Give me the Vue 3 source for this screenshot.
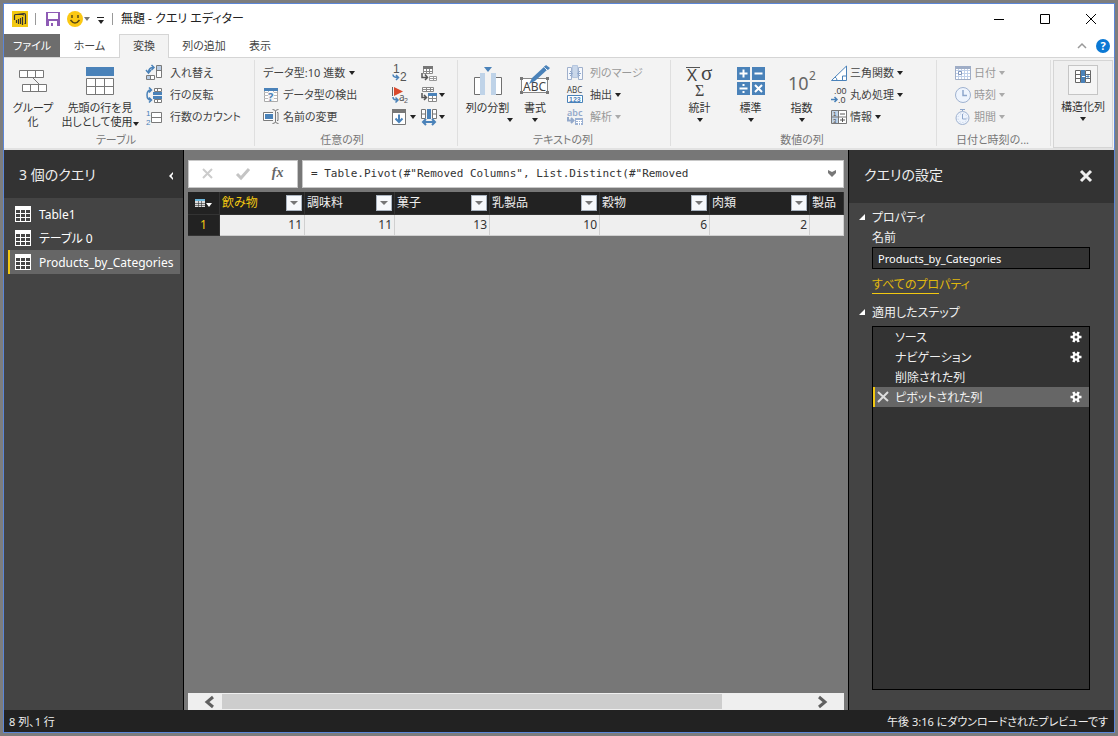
<script setup>
import { ref } from 'vue'

const B = '#4a82b9'
const G = '#7a7a7a'
const sans = 'font-family="Noto Sans"'
const tiny = 'font-family="Liberation Sans"'

const art = {
  swap: `<path d="M10.5.5h5v12h-5z" fill="#fff" stroke="${G}"/><path d="M11 1h4v4h-4z" fill="#b9cde4"/><path d="M10.5 5.5h5" stroke="${G}"/><path d="M.5 10.5h8v4h-8z" fill="#fff" stroke="${G}"/><path d="M1 11h4v3H1z" fill="#b9cde4"/><path d="M4.5 10.5v4" stroke="${G}"/><path d="M2.5 7.5Q2.5 2.5 7.5 2.5M5.5 0 8 2.5 5.5 5M0 5l2.5 3L5 5" fill="none" stroke="${B}" stroke-width="1.5"/>`,
  flip: `<path d="M8.5 1.5h7v3h-7zM8.5 12.5h7v3h-7zM11.5 1.5v3M11.5 12.5v3" fill="#fff" stroke="${G}"/><path d="M7 5h9v3H7zM7 9h9v3H7z" fill="${B}"/><path d="M5 3Q1 3 1 8t4 5M3 .5 5.5 3 3 5.5M3 10.5 5.5 13 3 15.5" fill="none" stroke="${B}" stroke-width="1.5"/>`,
  count: `<text x="0" y="7" font-size="8" ${tiny} fill="${B}">1</text><text x="0" y="16" font-size="8" ${tiny} fill="${B}">2</text><path d="M5.5 3.5h10v10h-10zM5.5 8.5h10" fill="#fff" stroke="${G}"/>`,
  detect: `<path d="M1.5 1.5h13v13h-13z" fill="#fff" stroke="#aaa"/><path d="M1 5.5h13M1 8.5h13M1 11.5h13M5.5 4v10M10.5 4v10" stroke="#bbb"/><path d="M1 1h14v3H1z" fill="${B}"/><path d="M5 5h6v9H5z" fill="#f3f3f3"/><text x="5" y="14" font-size="11" font-weight="700" ${sans} fill="${B}">?</text>`,
  rename: `<path d="M10 3.5H.5v8H10" fill="#fff" stroke="${G}"/><path d="M2 5h8v5H2z" fill="${B}"/><path d="M9.5.5q3 0 3 2v10q0 2-3 2M15.5.5q-3 0-3 2v10q0 2 3 2M14 3.5h1v8h-1" fill="none" stroke="${G}"/>`,
  replace: `<text x="1" y="8" font-size="12" ${tiny} fill="#555">1</text><text x="8" y="16" font-size="12" ${tiny} fill="#555">2</text><path d="M1 9.5q0 3 5 3M4 10l2.5 2.5L4 15" fill="none" stroke="${B}" stroke-width="1.5"/>`,
  flag: `<path d="M.5 0v9" stroke="#666"/><path d="M2 0l9 4.500L2 9z" fill="#d9492c"/><text x="7" y="14" font-size="10" ${sans} fill="#555">a</text><text x="12" y="16" font-size="7" ${tiny} fill="#555">2</text><path d="M1 10q0 3 4 3M3.5 10.5 6 13l-2.500 2.500" fill="none" stroke="${B}" stroke-width="1.5"/>`,
  fill: `<path d="M.5.5h13v15H.5z" fill="#fff" stroke="#777"/><path d="M0 0h14v4H0z" fill="#777"/><path d="M7 5.5v8M3.500 9.5 7 13l3.500-3.500" fill="none" stroke="${B}" stroke-width="2"/>`,
  unpivot: `<path d="M2.5 1.5h9v7h-9zM2 6.5h9M5.5 4v5M8.5 4v5" fill="#fff" stroke="#888"/><path d="M2 1h10v3H2z" fill="#777"/><path d="M8.5 11.5h7v4h-7zM8 13.5h8M12.5 11v5" fill="#fff" stroke="#999"/><path d="M1 8v4.500h5M4 9.5l2.500 3L4 15" fill="none" stroke="#555" stroke-width="1.5"/>`,
  pivot: `<path d="M1.5.5h11v4h-11zM1 2.5h12M5.5 0v5M9.5 0v5" fill="#fff" stroke="#888"/><path d="M7.5 6.5h8v8h-8zM7 11.5h9M11.5 8v7" fill="#fff" stroke="#888"/><path d="M7 6h9v3H7z" fill="${B}"/><path d="M1 6v4.500h4M3 8l2.500 2.500L3 13" fill="none" stroke="#555" stroke-width="1.5"/>`,
  move: `<path d="M.5.5h4v9h-4zM11.500.5h4v9h-4zM.5 5h4M11.500 5h4" fill="#fff" stroke="#777"/><path d="M6 0h4v10H6z" fill="${B}"/><path d="M3 13h10M5 10l-3 3 3 3M11 10l3 3-3 3" fill="none" stroke="${B}" stroke-width="2"/>`,
  merge: `<path d="M.5 2.5h4v12h-4zM11.500 2.5h4v12h-4z" fill="#f5f8fd" stroke="#9fb0cc"/><path d="M5.500.5h5v12h-5z" fill="#c9d7ea" stroke="#b5c6df"/><path d="M2 8.5h3M3 6l2.500 2.500L3 11M14 8.5h-3M13 6l-2.500 2.500L13 11" fill="none" stroke="#8ea6cb"/>`,
  extract: `<text x="0" y="6" font-size="8" ${sans} fill="#444">ABC</text><path d="M.5 8.500h15v7H.5z" fill="#fff" stroke="${B}"/><text x="2" y="15" font-size="7" font-weight="600" ${tiny} fill="${B}">123</text>`,
  parse: `<text x="0" y="7" font-size="9" font-weight="600" ${sans} fill="#93a9cb">abc</text><path d="M8 9h8v7H8z" fill="#9db2d3"/><path d="M9 11.500h6M9 13.500h6M11.500 11v5M13.500 11v5" stroke="#fff"/><path d="M1 8v3.500h5M4 9l2.500 2.500L4 14" fill="none" stroke="#93a9cb" stroke-width="2"/>`,
  trig: `<path d="M.5 15.500h15V1z" fill="#fff" stroke="${B}"/><path d="M11.500 15v-4H15M4 12q2 1 2 3.500" fill="none" stroke="${B}"/>`,
  round: `<text x="3" y="7" font-size="9" ${tiny} fill="#444">.00</text><text x="7" y="16" font-size="9" ${tiny} fill="#444">.0</text><path d="M0 12.500h6M3.500 10 6 12.500 3.500 15" fill="none" stroke="${B}" stroke-width="1.5"/>`,
  info: `<path d="M.5 1.500h15v13H.5z" fill="#fff" stroke="#777"/><path d="M1 2h6v12H1z" fill="#c3d5e9"/><path d="M1 8h14M7.500 2v12" stroke="#777"/><text x="2" y="7" font-size="6" ${tiny} fill="#444">1</text><text x="2" y="14" font-size="6" ${tiny} fill="#444">3</text><path d="M9 5h5M9 11h5M11.500 9v4" stroke="#555"/>`,
  date: `<path d="M.5 1.500h15v13H.5z" fill="#fff" stroke="#9fadc6"/><path d="M0 1h16v3H0z" fill="#9fadc6"/><path d="M1 5.500h14M1 8.500h14M1 11.500h14M3.500 4v10M6.500 4v10M9.500 4v10M12.500 4v10" stroke="#bfd0ea"/><path d="M3.500 6.500h3v3h-3z" fill="#fff" stroke="#8296bb"/>`,
  time: `<circle cx="8" cy="8" r="7.500" fill="#eef4fd" stroke="#9fb2d0"/><path d="M8 3v5.500h4" fill="none" stroke="#8ea6cb" stroke-width="1.5"/>`,
  span: `<circle cx="7.500" cy="9" r="6.500" fill="#eef4fd" stroke="#9fb2d0"/><path d="M5 .5h5M7.500 0v2M7.500 5v5h4" fill="none" stroke="#8ea6cb"/><circle cx="7.500" cy="9" r="4.500" fill="none" stroke="#bccbe3" stroke-dasharray="1 2"/>`,
  split: `<path d="M1.500 11.500h6v17h-6zM22.500 11.500h6v17h-6z" fill="#fff" stroke="#707070"/><path d="M7 7h5v22H7zM18 7h5v22h-5z" fill="#bfd3e8"/><path d="M11 1h8l-4 5z" fill="${B}"/>`,
  format: `<path d="M2.500 14.500h26v14h-26z" fill="#fff" stroke="#888"/><path d="M1 13h3v3H1zM27 13h3v3h-3zM1 27h3v3H1zM27 27h3v3h-3z" fill="#777"/><text x="4" y="27" font-size="12" ${sans} fill="#444">ABC</text><path d="M10 20l3-6L26 2l3 3-13 12z" fill="${B}"/><path d="M25 3l3 3" stroke="#fff"/><path d="M27 1l4 3-2 2-4-3z" fill="${B}"/>`,
  stats: `<path d="M1 1.500h14" stroke="#555"/><text x="2" y="15" font-size="17" ${sans} fill="#444">X</text><text x="16" y="14" font-size="21" font-family="Liberation Serif" fill="#444">σ</text><text x="10" y="30" font-size="16" font-family="Liberation Serif" fill="#444">Σ</text>`,
  standard: `<path d="M1 1h13v13H1zM16 1h13v13H16zM1 16h13v13H1zM16 16h13v13H16z" fill="${B}"/><path d="M3.500 7.500h8M7.500 3.500v8M18.500 7.500h8M3.500 22.500h8M19 19l7 7M26 19l-7 7M6.500 19h2M6.500 26h2" stroke="#fff" stroke-width="2"/>`,
  power: `<text x="1" y="24" font-size="18" ${sans} fill="#666">10</text><text x="22" y="14" font-size="12" ${sans} fill="#666">2</text>`,
  structured: `<path d="M.5 1.500h5v12h-5zM10.500 1.500h5v12h-5zM0 5.500h5M0 9.500h5M11 5.500h5M11 9.500h5" fill="#fff" stroke="#666"/><path d="M6 1h4v13H6z" fill="${B}"/><path d="M9 7.500h5M11.500 5l2.500 2.500-2.500 2.500" fill="none" stroke="${B}"/><path d="M7 7.500h3" stroke="#fff"/>`
}

const tableTools = [
  ['swap', '入れ替え'],
  ['flip', '行の反転'],
  ['count', '行数のカウント']
]
const textTools = [
  { icon: 'merge', text: '列のマージ', off: true },
  { icon: 'extract', text: '抽出', menu: true },
  { icon: 'parse', text: '解析', menu: true, off: true }
]
const numberBig = [['stats', '統計'], ['standard', '標準'], ['power', '指数']]
const numberTools = [
  { icon: 'trig', text: '三角関数' },
  { icon: 'round', text: '丸め処理' },
  { icon: 'info', text: '情報' }
]
const dateTools = [['date', '日付'], ['time', '時刻'], ['span', '期間']]

const queries = ['Table1', 'テーブル 0', 'Products_by_Categories']
const currentQuery = ref(2)
const columns = [
  { name: '飲み物', value: 11, cls: 'c1' },
  { name: '調味料', value: 11, cls: 'c2' },
  { name: '菓子', value: 13, cls: 'c3' },
  { name: '乳製品', value: 10, cls: 'c4' },
  { name: '穀物', value: 6, cls: 'c5' },
  { name: '肉類', value: 2, cls: 'c6' }
]
const steps = [
  { name: 'ソース', gear: true },
  { name: 'ナビゲーション', gear: true },
  { name: '削除された列', gear: false },
  { name: 'ピボットされた列', gear: true }
]
const currentStep = ref(3)
const queryName = ref('Products_by_Categories')
const formula = ref('= Table.Pivot(#"Removed Columns", List.Distinct(#"Removed')
</script>

<template>
  <div class="desktop">
    <div class="window">
      <header class="titlebar">
        <svg class="logo" viewBox="0 0 16 16"><path d="M0 0h16v16H0z" fill="#f2c811" /><path d="M2.500 9V4.500q0-1 1-1h7q1 0 1 1M13.500 6v6.500h-1M4.500 12V9M6.500 13V8M8.500 13V7M10.500 14V6M4.500 3.500 12 2.500q1.500 0 1.500 1.500v8" fill="none" stroke="#333" stroke-width="1.200" /></svg>
        <i class="bar"></i>
        <button class="plain save" aria-label="保存"><svg viewBox="0 0 14 14"><path d="M0 0h14v14H0z" fill="#8e5bb5" /><path d="M2 1h10v6H2zM3 9h8v5H3z" fill="#fff" /><path d="M5 11h2v3H5z" fill="#8e5bb5" /></svg></button>
        <button class="plain smile" aria-label="フィードバック"><svg viewBox="0 0 16 16"><circle cx="8" cy="8" r="8" fill="#fbc812" /><path d="M5 4v3M11 4v3M3.500 9q4.500 6 9 0" fill="none" stroke="#5a4a14" stroke-width="1.500" /></svg><i class="caret gray"></i></button>
        <button class="plain more" aria-label="カスタマイズ"><i class="dash"></i><i class="caret"></i></button>
        <i class="bar last"></i>
        <h1>無題 - クエリ エディター</h1>
        <div class="winctl">
          <button class="plain" aria-label="最小化"><svg viewBox="0 0 12 12"><path d="M1 6.500h10" stroke="#000" /></svg></button>
          <button class="plain" aria-label="最大化"><svg viewBox="0 0 12 12"><path d="M1.500 1.500h9v9h-9z" fill="none" stroke="#000" /></svg></button>
          <button class="plain" aria-label="閉じる"><svg viewBox="0 0 12 12"><path d="M1 1l10 10M11 1 1 11" stroke="#000" /></svg></button>
        </div>
      </header>

      <nav class="tabs">
        <button class="tab file">ファイル</button>
        <button class="tab home">ホーム</button>
        <button class="tab active">変換</button>
        <button class="tab add">列の追加</button>
        <button class="tab view">表示</button>
        <div class="tabs-right">
          <button class="plain" aria-label="リボンを折りたたむ"><svg class="chev" viewBox="0 0 10 10"><path d="M1 7l4-4 4 4" fill="none" stroke="#999" stroke-width="1.500" /></svg></button>
          <button class="plain help" aria-label="ヘルプ">?</button>
        </div>
      </nav>

      <section class="ribbon">
        <div class="group g-table">
          <div class="tools">
            <button class="big b-group">
              <svg class="i30" viewBox="0 0 30 30"><path d="M1.500 4.500h24v7h-24zM9.500 4.500v7M17.500 4.500v7M4.500 18.500h24v7h-24zM12.500 18.500v7M20.500 18.500v7" fill="#fff" stroke="#777" /><path d="M15 12l6 6" stroke="#777" /></svg>
              <span>グループ<br>化</span>
            </button>
            <button class="big b-head">
              <svg class="i30" viewBox="0 0 30 30"><path d="M1 1h28v9H1z" fill="#4a82b9" /><path d="M1.500 12.500h27v16h-27zM1 20.500h28M10.500 12v17M19.500 12v17" fill="#fff" stroke="#777" /></svg>
              <span>先頭の行を見<br>出しとして使用<i class="caret"></i></span>
            </button>
            <div class="stack">
              <button v-for="t in tableTools" :key="t[0]" class="small wide"><svg class="i16" viewBox="0 0 16 16" v-html="art[t[0]]"></svg>{{ t[1] }}</button>
            </div>
          </div>
          <p>テーブル</p>
        </div>

        <div class="group g-any">
          <div class="tools">
            <div class="stack types">
              <button class="small">データ型:10 進数<i class="caret"></i></button>
              <button class="small"><svg class="i16" viewBox="0 0 16 16" v-html="art.detect"></svg>データ型の検出</button>
              <button class="small"><svg class="i16" viewBox="0 0 16 16" v-html="art.rename"></svg>名前の変更</button>
            </div>
            <div class="stack icons">
              <button class="small" aria-label="値の置換"><svg class="i16" viewBox="0 0 16 16" v-html="art.replace"></svg></button>
              <button class="small" aria-label="エラーの置換"><svg class="i16" viewBox="0 0 16 16" v-html="art.flag"></svg></button>
              <button class="small" aria-label="フィル"><svg class="i16" viewBox="0 0 16 16" v-html="art.fill"></svg><i class="caret"></i></button>
            </div>
            <div class="stack icons">
              <button class="small" aria-label="列のピボット"><svg class="i16" viewBox="0 0 16 16" v-html="art.unpivot"></svg></button>
              <button class="small" aria-label="列のピボット解除"><svg class="i16" viewBox="0 0 16 16" v-html="art.pivot"></svg><i class="caret"></i></button>
              <button class="small" aria-label="移動"><svg class="i16" viewBox="0 0 16 16" v-html="art.move"></svg><i class="caret"></i></button>
            </div>
          </div>
          <p>任意の列</p>
        </div>

        <div class="group g-text">
          <div class="tools">
            <button class="big b-split"><svg class="i30" viewBox="0 0 30 30" v-html="art.split"></svg><span>列の分割</span><i class="caret end"></i></button>
            <button class="big b-format"><svg class="i32" viewBox="0 0 32 32" v-html="art.format"></svg><span>書式</span><i class="caret"></i></button>
            <div class="stack spaced">
              <button v-for="t in textTools" :key="t.icon" class="small" :class="{ off: t.off }" :disabled="t.off"><svg class="i16" viewBox="0 0 16 16" v-html="art[t.icon]"></svg>{{ t.text }}<i v-if="t.menu" class="caret"></i></button>
            </div>
          </div>
          <p>テキストの列</p>
        </div>

        <div class="group g-num">
          <div class="tools">
            <button v-for="t in numberBig" :key="t[0]" class="big b-num"><svg class="i30" viewBox="0 0 30 30" v-html="art[t[0]]"></svg><span>{{ t[1] }}</span><i class="caret"></i></button>
            <div class="stack tight">
              <button v-for="t in numberTools" :key="t.icon" class="small"><svg class="i16" viewBox="0 0 16 16" v-html="art[t.icon]"></svg>{{ t.text }}<i class="caret"></i></button>
            </div>
          </div>
          <p>数値の列</p>
        </div>

        <div class="group g-date">
          <div class="tools">
            <div class="stack tight">
              <button v-for="t in dateTools" :key="t[0]" class="small off" disabled><svg class="i16" viewBox="0 0 16 16" v-html="art[t[0]]"></svg>{{ t[1] }}<i class="caret"></i></button>
            </div>
          </div>
          <p>日付と時刻の...</p>
        </div>

        <button class="big structured"><span class="iconbox"><svg class="i16" viewBox="0 0 16 16" v-html="art.structured"></svg></span><span>構造化列</span><i class="caret"></i></button>
      </section>

      <main class="work">
        <aside class="queries">
          <div class="pane-head">
            <h2>3 個のクエリ</h2>
            <button class="plain" aria-label="折りたたむ"><svg class="collapse" viewBox="0 0 6 8"><path d="M5 0 1 4l4 4V6L3.500 4 5 2z" fill="#fff" /></svg></button>
          </div>
          <ul>
            <li v-for="(q, i) in queries" :key="q">
              <button :class="{ on: i === currentQuery }" @click="currentQuery = i">
                <svg class="i16" viewBox="0 0 16 16"><path d="M0 0h16v16H0z" fill="#fff" /><path d="M1 4h4v3H1zM6 4h4v3H6zM11 4h4v3h-4zM1 8h4v3H1zM6 8h4v3H6zM11 8h4v3h-4zM1 12h4v3H1zM6 12h4v3H6zM11 12h4v3h-4z" fill="#444" /></svg><span>{{ q }}</span>
              </button>
            </li>
          </ul>
        </aside>

        <section class="center">
          <div class="formula">
            <div class="fx">
              <button class="plain" aria-label="キャンセル"><svg viewBox="0 0 14 14"><path d="M2 2l9 9M11 2l-9 9" stroke="#ccc" stroke-width="2" /></svg></button>
              <button class="plain" aria-label="確定"><svg viewBox="0 0 14 14"><path d="M1 7l4 4 8-9" fill="none" stroke="#c4c4c4" stroke-width="3" /></svg></button>
              <button class="plain f">fx</button>
            </div>
            <div class="expr">
              <input v-model="formula" aria-label="数式" spellcheck="false">
              <button class="plain" aria-label="展開"><svg viewBox="0 0 10 8"><path d="M1 0l4 2 4-2v3L5 7 1 3z" fill="#777" /></svg></button>
            </div>
          </div>
          <div class="grid">
            <table>
              <thead>
                <tr>
                  <th class="c0"><button class="plain corner" aria-label="テーブル"><svg viewBox="0 0 10 8"><path d="M0 0h10v2H0z" fill="#6cb7dd" /><path d="M0 2h10v6H0z" fill="#ddd" /><path d="M0 4.500h10M0 6.500h10M3.500 2v6M6.500 2v6" stroke="#333" stroke-width=".6" /></svg><i class="caret"></i></button></th>
                  <th v-for="(c, i) in columns" :key="c.name" :class="[c.cls, { sel: i === 0 }]"><div><span>{{ c.name }}</span><button class="filter" :aria-label="c.name + ' フィルター'"><i class="caret"></i></button></div></th>
                  <th><div><span>製品</span></div></th>
                </tr>
              </thead>
              <tbody>
                <tr><th scope="row">1</th><td v-for="c in columns" :key="c.name">{{ c.value }}</td><td></td></tr>
              </tbody>
            </table>
          </div>
          <div class="scroll">
            <button class="plain" aria-label="左"><svg viewBox="0 0 10 12"><path d="M9 1 3 6l6 5" fill="none" stroke="#606060" stroke-width="3" /></svg></button>
            <div class="track"><i></i></div>
            <button class="plain" aria-label="右"><svg viewBox="0 0 10 12"><path d="M1 1l6 5-6 5" fill="none" stroke="#606060" stroke-width="3" /></svg></button>
          </div>
        </section>

        <aside class="settings">
          <div class="pane-head tall">
            <h2>クエリの設定</h2>
            <button class="plain" aria-label="閉じる"><svg class="i12" viewBox="0 0 12 12"><path d="M1 1l10 10M11 1 1 11" stroke="#f0f0f0" stroke-width="3" /></svg></button>
          </div>
          <div class="body">
            <h3>プロパティ</h3>
            <label for="qname">名前</label>
            <input id="qname" v-model="queryName" spellcheck="false">
            <a href="#"><u>すべてのプロ</u>パティ</a>
            <h3>適用したステップ</h3>
            <ol>
              <li v-for="(s, i) in steps" :key="s.name" :class="{ on: i === currentStep }" @click="currentStep = i">
                <button class="plain del" aria-label="削除"><svg v-if="i === currentStep" class="i12" viewBox="0 0 12 12"><path d="M1 1l10 9M11 1 1 11" stroke="#ddd" stroke-width="2" /></svg></button>
                <span>{{ s.name }}</span>
                <button v-if="s.gear" class="plain" aria-label="設定"><svg class="i12" viewBox="0 0 12 12"><path d="M.5 6h11M3.300 1l5.400 10M8.700 1 3.300 11" stroke="#fff" stroke-width="2.600" /><circle cx="6" cy="6" r="3.500" fill="#fff" /><circle cx="6" cy="6" r="1.500" fill="#444" /></svg></button>
              </li>
            </ol>
          </div>
        </aside>
      </main>

      <footer class="status"><span>8 列、1 行</span><span>午後 3:16 にダウンロードされたプレビューです</span></footer>
    </div>
  </div>
</template>

<style>
body { margin: 0; }
</style>

<style scoped>
* { box-sizing: border-box; }
.desktop { min-height: 100vh; padding: 3px; background: #7d7d7d; display: flex; font: 11px/14px "Noto Sans", "Noto Sans CJK JP", sans-serif; font-feature-settings: "palt"; color: #333; }
.window { flex: 1; min-width: 0; border: 1px solid #5b86d8; background: #fff; display: flex; flex-direction: column; }
button, input { font: inherit; font-feature-settings: inherit; color: inherit; margin: 0; padding: 0; border: 0; background: none; border-radius: 0; }
svg { display: block; flex: none; overflow: visible; }
h1, h2, h3, p, ul, ol { margin: 0; padding: 0; font-weight: 400; list-style: none; }
.plain { display: flex; align-items: center; justify-content: center; }
.i12 { width: 12px; height: 12px; }
.i16 { width: 16px; height: 16px; }
.i30 { width: 30px; height: 30px; }
.i32 { width: 32px; height: 32px; }
.caret { display: inline-block; flex: none; width: 0; height: 0; border: 3px solid transparent; border-top: 4px solid #222; border-bottom: 0; }
.caret.gray { border-top-color: #777; }

.titlebar { height: 30px; display: flex; align-items: center; padding-left: 8px; color: #222; }
.logo { width: 16px; height: 16px; }
.bar { width: 1px; height: 12px; background: #999; margin: 0 10px 0 7px; }
.bar.last { margin: 0 8px; }
.save svg { width: 14px; height: 14px; }
.smile { margin-left: 7px; gap: 1px; }
.smile svg { width: 16px; height: 16px; }
.more { flex-direction: column; gap: 2px; margin-left: 7px; padding-top: 3px; }
.dash { width: 7px; height: 1px; background: #222; }
h1 { font-size: 12px; line-height: 16px; }
.winctl { margin-left: auto; display: flex; }
.winctl button { width: 46px; height: 28px; }
.winctl svg { width: 12px; height: 12px; }

.tabs { display: flex; height: 24px; border-bottom: 1px solid #d5d5d5; color: #444; }
.tab { height: 23px; }
.tab.file { width: 56px; background: #6d6d6d; color: #fff; }
.tab.home { width: 59px; }
.tab.active { width: 50px; height: 24px; border: 1px solid #d5d5d5; border-bottom: 0; padding-bottom: 2px; background: #f3f3f3; }
.tab.add { width: 70px; }
.tab.view { width: 42px; }
.tabs-right { margin-left: auto; display: flex; align-items: center; gap: 9px; padding-right: 4px; }
.chev { width: 10px; height: 10px; }
.help { width: 14px; height: 14px; border-radius: 50%; background: #0a78d4; color: #fff; font-weight: 700; }

.ribbon { display: flex; background: #f3f3f3; padding: 2px 1px 2px 0; border-bottom: 2px solid #e2e2e2; height: 92px; }
.group { display: flex; flex-direction: column; border-right: 1px solid #dfdfdf; padding-top: 2px; flex: none; }
.group p { text-align: center; color: #777; line-height: 18px; margin-top: 3px; }
.tools { display: flex; height: 66px; }
.g-table { width: 251px; }
.g-any { width: 203px; padding-left: 8px; }
.g-text { width: 213px; padding-left: 4px; }
.g-num { width: 266px; padding-left: 3px; }
.g-date { width: 114px; padding-left: 18px; }
.g-table p { padding-right: 26px; }
.g-any p { padding-right: 36px; }
.g-text p, .g-num p { padding-right: 6px; }
.g-date p { padding-right: 20px; }
.big { display: flex; flex-direction: column; align-items: center; padding-top: 4px; text-align: center; white-space: nowrap; flex: none; }
.big > svg { margin-bottom: 5px; }
.big > .i32 { margin-top: -2px; }
.big > .caret { margin-top: 3px; }
.big > .caret.end { align-self: flex-end; }
.b-group { width: 58px; }
.b-head { width: 76px; margin-right: 8px; }
.b-split { width: 51px; }
.b-format { width: 44px; margin-right: 10px; }
.b-num { width: 51px; }
.stack { display: flex; flex-direction: column; }
.g-num .stack { margin-left: 4px; }
.small { display: flex; align-items: center; height: 22px; gap: 4px; white-space: nowrap; color: #444; }
.small.wide { gap: 8px; }
.tight .small { gap: 3px; }
.spaced .small { gap: 3px; }
.spaced svg { margin-right: 4px; }
.small.off { color: #999; }
.off .caret { border-top-color: #aaa; }
.types { width: 129px; }
.icons { width: 29px; }
.icons .small { gap: 2px; }
.structured { margin-left: 2px; width: 60px; height: 88px; border: 1px solid #d5d5d5; background: #efefef; }
.iconbox { width: 30px; height: 30px; border: 1px solid #c5c5c5; background: #f5f5f5; display: flex; align-items: flex-start; justify-content: center; padding-top: 3px; margin-bottom: 5px; }

.work { flex: 1; display: flex; min-height: 0; }
.queries { width: 180px; border-right: 1px solid #000; background: #444; color: #fff; }
.pane-head { height: 48px; background: #333; display: flex; align-items: center; justify-content: space-between; padding: 2px 9px 0 15px; color: #eee; }
.pane-head.tall { height: 53px; padding: 0 22px 2px 15px; }
.tall h2 { padding-bottom: 2px; }
h2 { font-size: 14px; line-height: 18px; }
.collapse { width: 6px; height: 8px; margin-top: 2px; }
.queries ul { padding: 4px 3px 0 4px; }
.queries li button { display: flex; align-items: center; gap: 8px; width: 100%; height: 24px; border-left: 2px solid transparent; padding-left: 5px; font-size: 12px; white-space: nowrap; }
.queries li span { padding-top: 2px; }
.queries li .on { background: #666; border-color: #f2c811; }

.center { flex: 1; min-width: 0; background: #777; padding: 10px 4px 0; display: flex; flex-direction: column; }
.formula { display: flex; gap: 4px; height: 28px; }
.fx, .expr { background: #fff; border: 1px solid #c8c8c8; display: flex; }
.fx { width: 110px; padding: 0 2px; }
.fx button { flex: 1; }
.fx svg { width: 14px; height: 14px; }
.fx .f { font: italic 700 14px/18px "Liberation Serif", serif; color: #666; padding-bottom: 3px; }
.expr { flex: 1; min-width: 0; padding: 0 6px 0 8px; }
.expr input { flex: 1; min-width: 0; font: 11px/16px "DejaVu Sans Mono", monospace; color: #333; outline: 0; }
.expr svg { width: 10px; height: 8px; }
.grid { margin-top: 4px; flex: 1; overflow: hidden; }
table { width: 100%; table-layout: fixed; border-collapse: separate; border-spacing: 0; font-size: 12px; }
th { background: #222; color: #eee; font-weight: 400; text-align: left; padding: 0; height: 23px; border-right: 1px solid #333; border-bottom: 1px solid #333; white-space: nowrap; }
th > div { display: flex; justify-content: space-between; align-items: center; padding: 0 2px; }
td { background: #efefef; height: 21px; padding: 0 2px; text-align: right; border-right: 1px solid #d0d0d0; border-bottom: 1px solid #d0d0d0; }
tbody th { height: 21px; text-align: center; color: #f2c811; }
.sel { color: #f2c811; }
.c0 { width: 32px; }
.c1 { width: 85px; }
.c2 { width: 90px; }
.c3 { width: 95px; }
.c4, .c5 { width: 110px; }
.c6 { width: 100px; }
.corner { margin: auto; gap: 1px; }
.corner svg { width: 10px; height: 8px; }
.corner .caret { border-top-color: #fff; margin-top: 4px; }
.filter { width: 16px; height: 16px; background: #f7f9fc; border: 1px solid #aab4c0; display: flex; align-items: center; justify-content: center; }
.filter .caret { border-width: 4px 4px 0; border-top-color: #777; }
.scroll { display: flex; height: 17px; background: #efefef; }
.scroll button { width: 34px; padding-left: 8px; }
.scroll button:last-child { padding: 0 8px 0 0; }
.scroll svg { width: 10px; height: 12px; }
.track { flex: 1; padding: 1px 0; }
.track i { display: block; width: 85%; height: 15px; background: #cdcdcd; }

.settings { width: 266px; border-left: 1px solid #000; background: #444; color: #f0f0f0; display: flex; flex-direction: column; font-size: 12px; }
.body { flex: 1; display: flex; flex-direction: column; padding: 7px 24px 20px 23px; }
h3 { font-size: 12px; line-height: 16px; position: relative; }
h3::before { content: ""; position: absolute; left: -13px; top: 4px; border-left: 6px solid transparent; border-bottom: 6px solid #fff; }
label { line-height: 16px; margin-top: 4px; }
#qname { height: 22px; margin-top: 1px; border: 1px solid #000; background: #333; padding: 0 5px; color: #fff; font-size: 11px; }
.body a { color: #e0b80c; line-height: 14px; margin: 9px 0 13px; text-decoration: none; align-self: flex-start; }
.body u { text-decoration: none; border-bottom: 1px solid #f2c811; }
.body ol { flex: 1; margin-top: 5px; border: 1px solid #000; background: #333; }
.body li { display: flex; align-items: center; height: 20px; border-left: 2px solid transparent; padding-right: 7px; }
.body li.on { background: #666; border-color: #f2c811; }
.body li span { flex: 1; padding-top: 1px; }
.del { width: 12px; margin: 0 6px 0 2px; }

.status { height: 22px; background: #222; color: #eee; display: flex; align-items: center; justify-content: space-between; padding: 1px 6px 0 5px; }
</style>
